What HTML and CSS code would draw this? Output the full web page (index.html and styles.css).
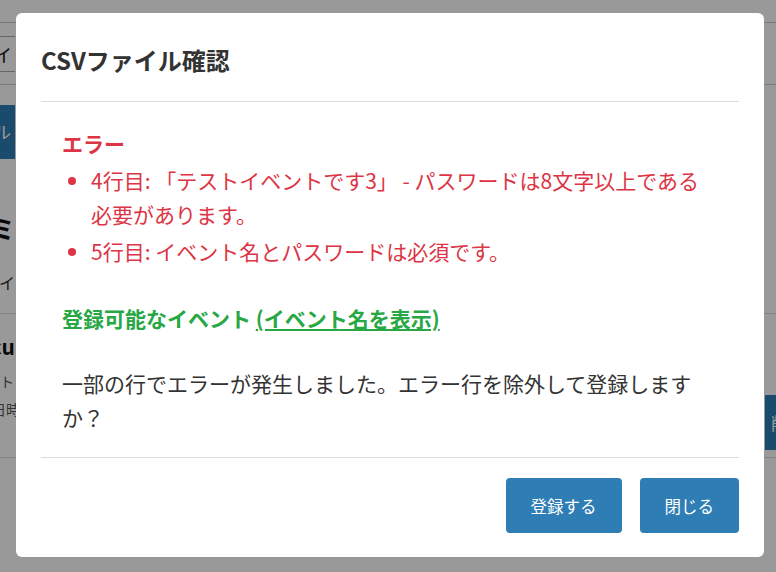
FILE: index.html
```html
<!DOCTYPE html>
<html lang="ja">
<head>
<meta charset="utf-8">
<title>CSVファイル確認</title>
<link rel="stylesheet" href="styles.css">
</head>
<body>
<div class="page">
  <div class="bar-top"></div>
  <div class="toolbar">
    <div class="clip-left">
      <div class="bg-input">ファイル選択: ファイ</div>
    </div>
  </div>
  <div class="btn-row">
    <div class="clip-left">
      <div class="bg-btn">CSVファイル</div>
    </div>
  </div>
  <div class="clip-left bg-heading"><span>イベント一覧ミ</span></div>
  <div class="clip-left bg-sub"><span>登録済みのイ</span></div>
  <div class="bg-row">
    <div class="bg-col">
      <div class="clip-left bg-name"><span>Secu</span></div>
      <div class="clip-wide bg-meta meta-a"><span>イベント</span></div>
      <div class="clip-wide bg-meta"><span>開催日時</span></div>
    </div>
    <div class="clip-right">
      <div class="bg-del">削除</div>
    </div>
  </div>
</div>

<div class="overlay">
  <div class="modal">
    <div class="modal-header">
      <h4 class="modal-title">CSVファイル確認</h4>
    </div>
    <div class="modal-body">
      <div class="error-title">エラー</div>
      <ul class="error-list">
        <li>4行目: 「テストイベントです3」 - パスワードは8文字以上である必要があります。</li>
        <li>5行目: イベント名とパスワードは必須です。</li>
      </ul>
      <div class="ok-title">登録可能なイベント <a href="#" class="ok-link">(イベント名を表示)</a></div>
      <p class="confirm">一部の行でエラーが発生しました。エラー行を除外して登録しますか？</p>
    </div>
    <div class="modal-footer">
      <button class="btn">登録する</button>
      <button class="btn">閉じる</button>
    </div>
  </div>
</div>
</body>
</html>
```

FILE: styles.css
```css
html, body {
  margin: 0;
  padding: 0;
  height: 100%;
  overflow: hidden;
  background: #fff;
}

body {
  font-family: "Noto Sans CJK JP", "Noto Sans", sans-serif;
  color: #333;
}

/* ---------- background page ---------- */
.page {
  display: flex;
  flex-direction: column;
}

.bar-top {
  height: 22px;
  border-bottom: 1px solid #ccc;
}

.toolbar {
  height: 61px;
  border-bottom: 1px solid #ccc;
  display: flex;
  align-items: center;
}

.clip-left {
  width: 15px;
  overflow: hidden;
  display: flex;
  justify-content: flex-end;
  white-space: nowrap;
}

.clip-wide {
  width: 20px;
  overflow: hidden;
  display: flex;
  justify-content: flex-end;
  white-space: nowrap;
}

.bg-input {
  flex: none;
  height: 34px;
  line-height: 34px;
  border-top: 1px solid #aaa;
  border-bottom: 1px solid #aaa;
  font-size: 18px;
  color: #111;
  padding-right: 3px;
}

.btn-row {
  padding-top: 20px;
}

.bg-btn {
  flex: none;
  height: 54px;
  line-height: 54px;
  background: #2e7db5;
  color: #fff;
  font-size: 17px;
  padding-right: 4px;
}

.bg-heading {
  margin-top: 49px;
  font-size: 26px;
  font-weight: 700;
  line-height: 40px;
  color: #111;
}

.bg-sub {
  margin-top: 22px;
  font-size: 16px;
  line-height: 24px;
  color: #333;
}

.bg-row {
  margin-top: 19px;
  border-top: 1px solid #ddd;
  border-bottom: 1px solid #ddd;
  display: flex;
  justify-content: space-between;
  padding-top: 13px;
}

.bg-col {
  display: flex;
  flex-direction: column;
  padding-bottom: 36px;
}

.bg-name {
  font-size: 21px;
  font-weight: 700;
  line-height: 38px;
  color: #111;
}

.bg-meta {
  margin-top: 4px;
  font-size: 14px;
  line-height: 24px;
  color: #555;
}

.meta-a span {
  padding-right: 6px;
}

.clip-right {
  width: 11px;
  overflow: hidden;
  display: flex;
  white-space: nowrap;
  align-self: flex-end;
  margin-bottom: 7px;
}

.bg-del {
  flex: none;
  height: 55px;
  line-height: 55px;
  background: #2e7db5;
  color: #fff;
  font-size: 17px;
  padding: 0 20px 0 6px;
}

/* ---------- modal ---------- */
.overlay {
  position: fixed;
  inset: 0;
  background: rgba(0, 0, 0, 0.4);
  padding: 13px 12px 0 16px;
}

.modal {
  background: #fff;
  border-radius: 6px;
}

.modal-header {
  margin: 0 25px;
  padding: 30px 0 24px;
  border-bottom: 1px solid #dcdcdc;
}

.modal-title {
  margin: 0;
  font-size: 24px;
  font-weight: 700;
  line-height: 34px;
  color: #333;
}

.modal-body {
  margin: 0 25px;
  padding: 24px 21px 23px;
  font-size: 21px;
  line-height: 34px;
}

.error-title {
  color: #dc3545;
  font-weight: 700;
}

.error-list {
  margin: 0;
  padding-left: 29px;
  color: #dc3545;
}

.error-list li {
  margin-top: 3px;
}

.ok-title {
  margin-top: 33px;
  color: #28a745;
  font-weight: 700;
}

.ok-link {
  color: #28a745;
  text-decoration: underline;
}

.confirm {
  margin: 31px 0 0;
  color: #333;
}

.modal-footer {
  margin: 0 25px;
  padding: 20px 0 24px;
  border-top: 1px solid #dcdcdc;
  display: flex;
  justify-content: flex-end;
  gap: 18px;
}

.btn {
  height: 55px;
  padding: 0 25px;
  border: none;
  border-radius: 4px;
  background: #2e7db5;
  color: #fff;
  font-family: "Noto Sans CJK JP", "Noto Sans", sans-serif;
  font-size: 16.5px;
  cursor: pointer;
}
```
